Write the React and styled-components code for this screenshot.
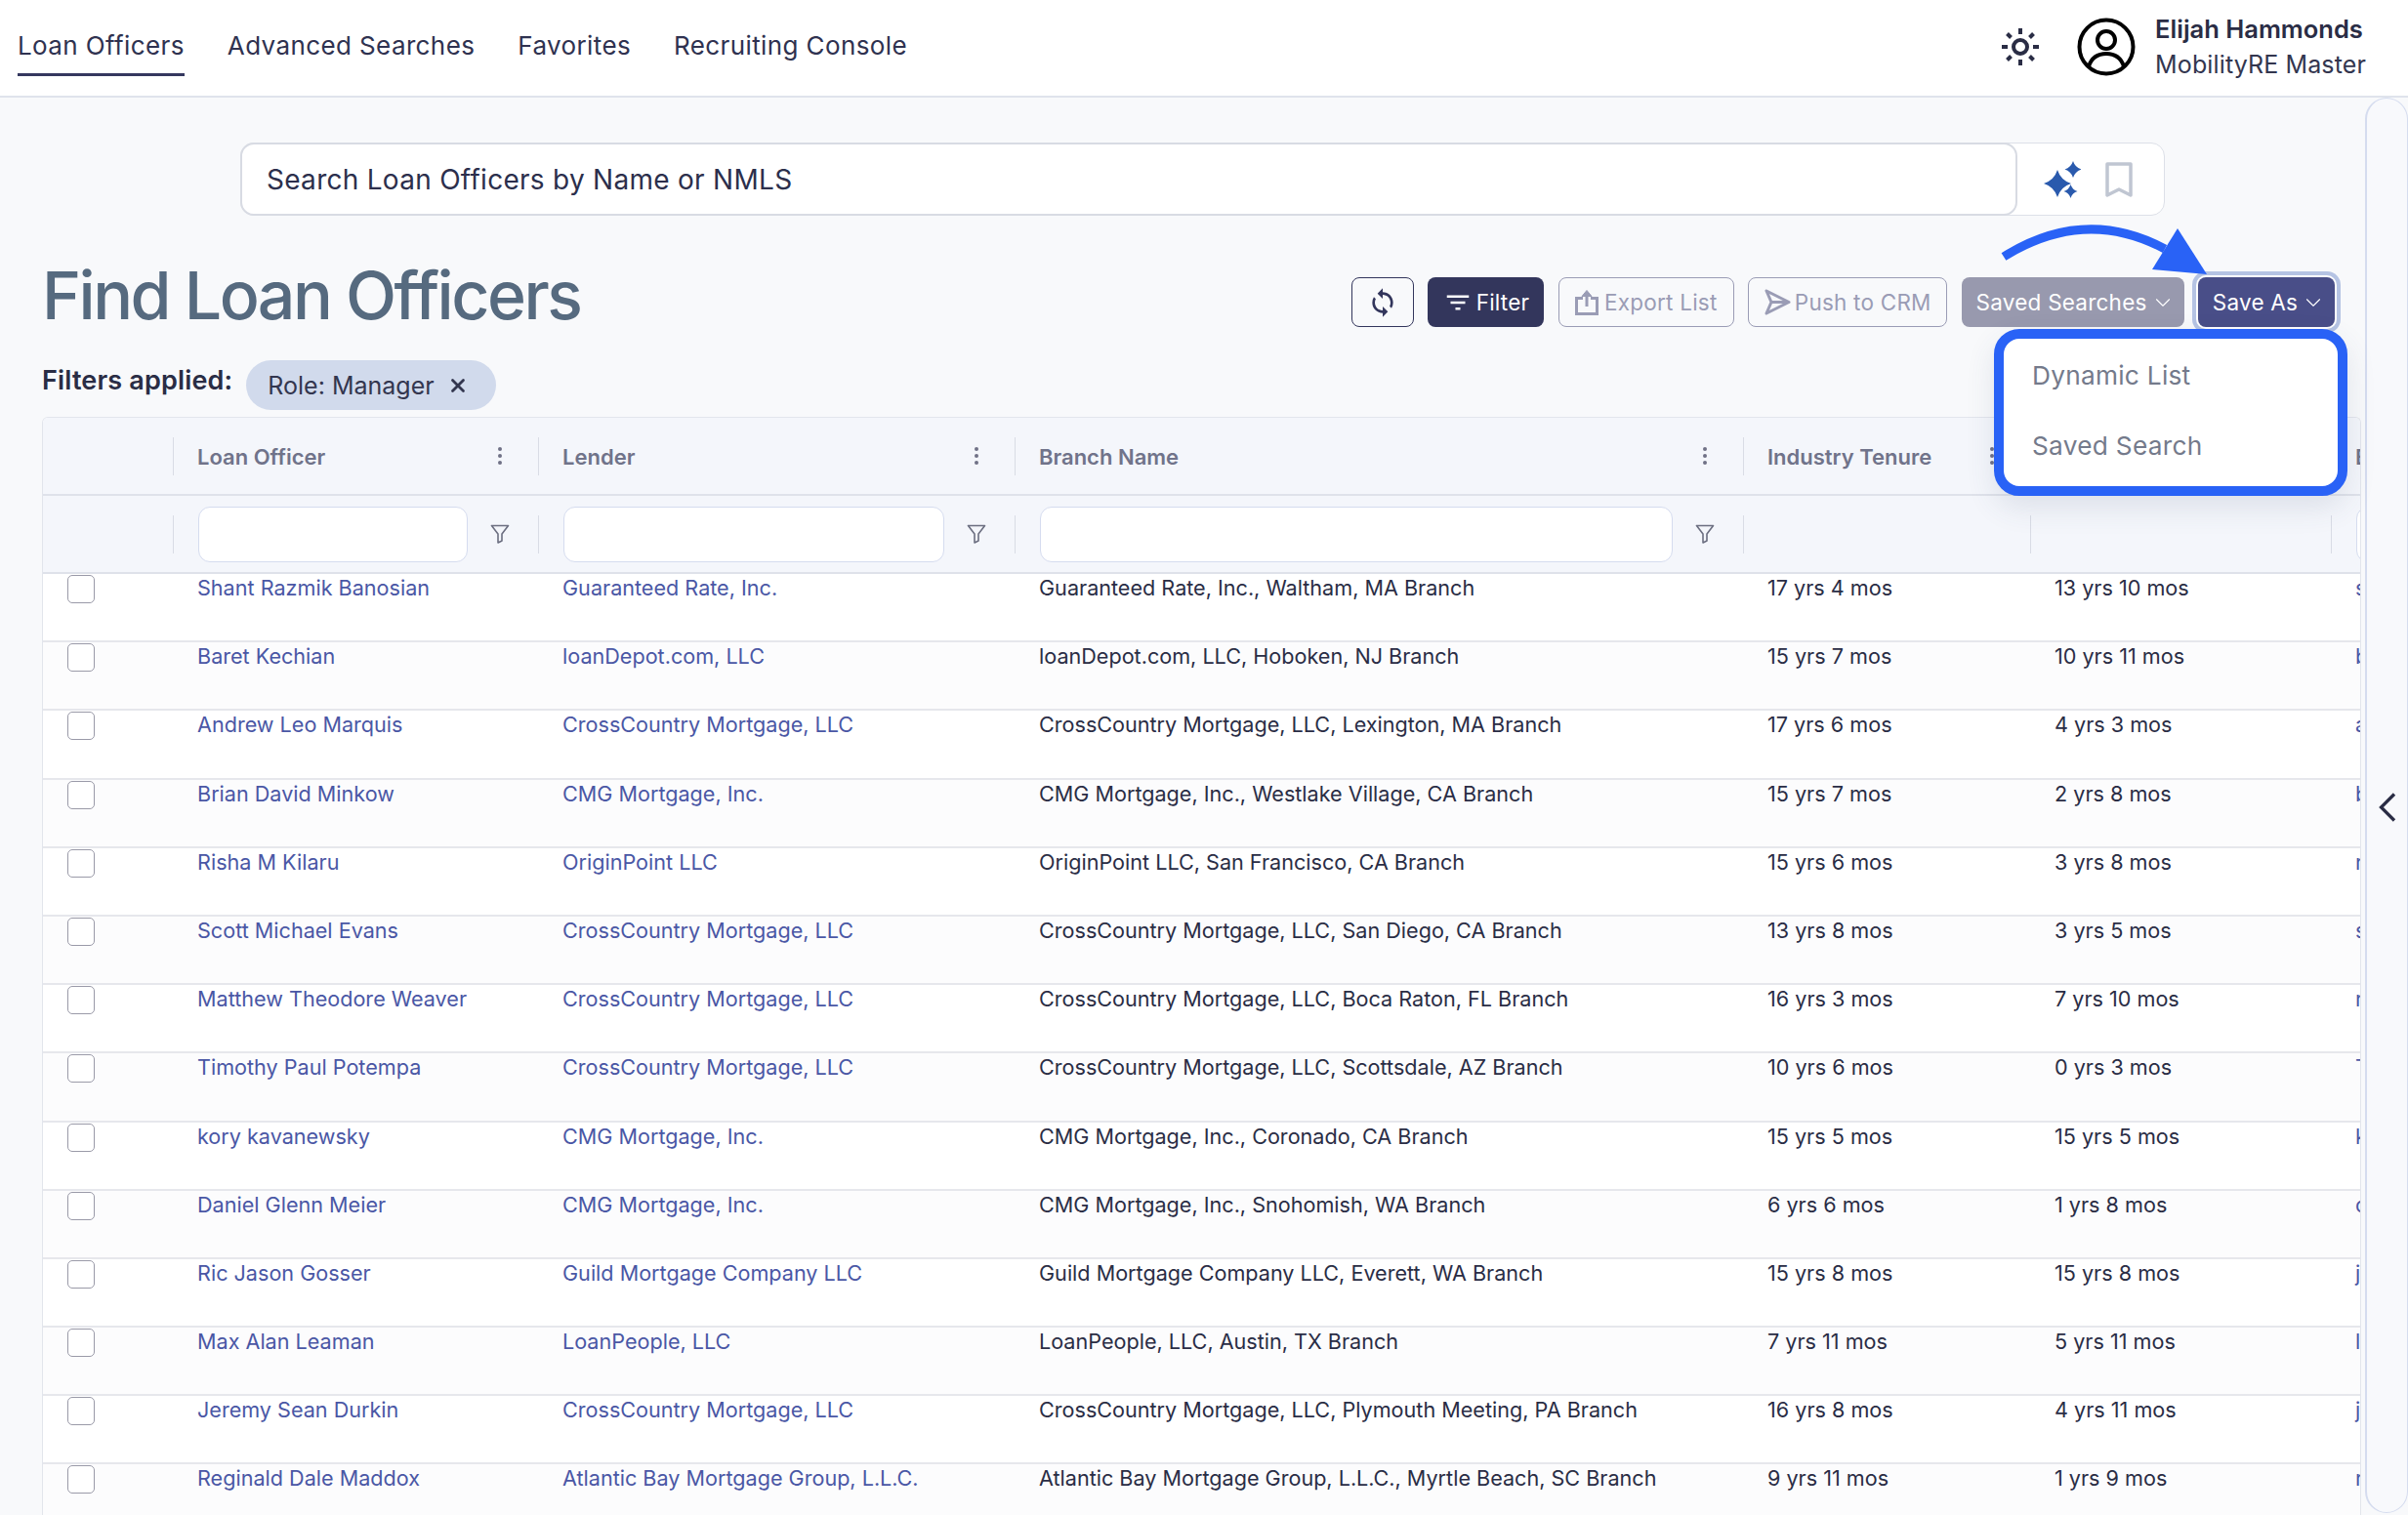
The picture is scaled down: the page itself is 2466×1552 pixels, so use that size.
import React from "react";
import styled, { createGlobalStyle } from "styled-components";
import { ChevronDown, X } from "lucide-react";
import { MdSync, MdFilterList } from "react-icons/md";

const GlobalStyle = createGlobalStyle`
  html, body { margin: 0; padding: 0; height: 100%; overflow: hidden; }
  body { font-family: "Inter", "Liberation Sans", sans-serif; color: #2a2d45; background: #f8f9fb; }
  * { box-sizing: border-box; }
`;

const Page = styled.div`
  width: 2466px;
  height: 1552px;
  display: flex;
  flex-direction: column;
  overflow: hidden;
`;

const TopBar = styled.header`
  height: 100px;
  flex: none;
  background: #fff;
  border-bottom: 2px solid #dfe3ec;
  display: flex;
  align-items: stretch;
  padding: 0 43px 0 18px;
`;

const Nav = styled.nav`
  display: flex;
  gap: 44px;
`;

const NavItem = styled.a`
  font-size: 26px;
  letter-spacing: 0.015em;
  color: #2f3250;
  height: 78px;
  padding-top: 29px;
  line-height: 36px;
  border-bottom: 3px solid ${(p) => (p.$active ? "#35385f" : "transparent")};
`;

const UserBox = styled.div`
  margin-left: auto;
  display: flex;
  align-items: center;
  padding-bottom: 2px;
`;

const SunWrap = styled.div`
  display: flex;
  margin-right: 39px;
`;

const UserText = styled.div`
  margin-left: 20px;
  display: flex;
  flex-direction: column;
  gap: 6px;
`;

const UserName = styled.div`
  font-size: 25.5px;
  font-weight: 600;
  line-height: 30px;
  color: #2a2d45;
`;

const UserRole = styled.div`
  font-size: 25px;
  line-height: 30px;
  letter-spacing: 0.005em;
  color: #33364f;
`;

const Body = styled.div`
  flex: 1;
  display: flex;
  min-height: 0;
`;

const Content = styled.main`
  width: 2418px;
  flex: none;
  padding-left: 43px;
  display: flex;
  flex-direction: column;
  min-width: 0;
`;

const SearchRow = styled.div`
  margin: 46px 0 0 203px;
  width: 1971px;
  height: 75px;
  display: flex;
  border: 1px solid #dde0e8;
  border-radius: 14px;
  background: #fff;
  flex: none;
`;

const SearchBox = styled.div`
  width: 1820px;
  margin: -1px 0 -1px -1px;
  border: 2px solid #d8dbe3;
  border-radius: 14px;
  font-size: 28px;
  letter-spacing: 0.01em;
  color: #2c2f4c;
  display: flex;
  align-items: center;
  padding-left: 25px;
`;

const SearchTools = styled.div`
  flex: 1;
  display: flex;
  align-items: center;
  padding-left: 27px;
  gap: 25px;
`;

const TitleRow = styled.div`
  flex: none;
  height: 130px;
  display: flex;
  align-items: flex-start;
  padding-right: 27px;
`;

const Title = styled.h1`
  margin: 44px 0 0 0;
  font-size: 68px;
  font-weight: 500;
  line-height: 74px;
  letter-spacing: -0.037em;
  color: #566a7f;
`;

const Toolbar = styled.div`
  margin: 63px 0 0 auto;
  display: flex;
  gap: 14.4px;
  position: relative;
`;

const ToolButton = styled.button`
  font: inherit;
  height: 51px;
  width: ${(p) => p.$w}px;
  padding: 0;
  font-size: 22.5px;
  letter-spacing: 0.01em;
  border-radius: 8px;
  display: flex;
  align-items: center;
  justify-content: center;
  gap: ${(p) => p.$gap || 0}px;
  border: 1px solid ${(p) => p.$line || "transparent"};
  background: ${(p) => p.$bg || "transparent"};
  color: ${(p) => p.$fg || "#fff"};
`;

const SaveAs = styled(ToolButton)`
  box-shadow: 0 0 0 2px #fff, 0 0 0 6px #b5c3e3;
`;

const Caret = styled(ChevronDown)`
  margin: 0 -6px;
  flex: none;
`;

const Dropdown = styled.div`
  position: absolute;
  top: 53px;
  right: -13px;
  width: 362px;
  height: 171px;
  background: #fff;
  border: 10px solid #2962f6;
  border-radius: 26px;
  box-shadow: 0 12px 30px rgba(60, 70, 110, 0.12);
  padding: 2px 0 0 29px;
  z-index: 5;
`;

const DropItem = styled.div`
  font-size: 26.25px;
  letter-spacing: 0.01em;
  line-height: 72px;
  color: #747a8b;
`;

const ArrowOverlay = styled.svg`
  position: absolute;
  left: 656px;
  top: -60px;
  width: 230px;
  height: 64px;
  overflow: visible;
  z-index: 6;
`;

const FiltersRow = styled.div`
  flex: none;
  height: 76px;
  display: flex;
  align-items: flex-start;
  padding-top: 18px;
  gap: 14px;
`;

const FiltersLabel = styled.div`
  font-size: 27px;
  font-weight: 600;
  line-height: 42px;
  letter-spacing: 0.006em;
  color: #2a2d45;
`;

const Chip = styled.div`
  width: 256px;
  height: 51px;
  border-radius: 26px;
  background: #d1daec;
  font-size: 25px;
  color: #33364f;
  display: flex;
  align-items: center;
  padding-left: 22px;
  gap: 13px;
`;

const Table = styled.section`
  flex: 1;
  min-height: 0;
  overflow: hidden;
  border: 1px solid #e2e5ec;
  border-bottom: 0;
  border-radius: 6px 6px 0 0;
  background: #fff;
`;

const cols = "133px 374px 488px 746px 294px 308px 300px";

const HeadRow = styled.div`
  display: grid;
  grid-template-columns: ${cols};
  height: 80px;
  background: #f4f6fb;
  border-bottom: 2px solid #dfe2ea;
`;

const FilterRow = styled(HeadRow)``;

const HeadCell = styled.div`
  display: flex;
  align-items: center;
  min-width: 0;
`;

const Sep = styled.span`
  flex: none;
  width: 1px;
  height: 39px;
  background: #d9dce5;
`;

const HeadLabel = styled.span`
  margin-left: 24px;
  padding-top: 1px;
  font-size: 22px;
  font-weight: 600;
  color: #70738a;
  white-space: nowrap;
`;

const Kebab = styled.svg`
  flex: none;
  margin-left: auto;
  margin-right: 36px;
  color: #6f7186;
`;

const FilterInput = styled.div`
  flex: 1;
  height: 57px;
  margin-left: 25px;
  background: #fff;
  border: 1px solid #d5dcef;
  border-radius: 12px;
  min-width: ${(p) => p.$min || 0}px;
`;

const Funnel = styled.svg`
  flex: none;
  margin: 0 29px 0 23px;
`;

const Row = styled.div`
  display: grid;
  grid-template-columns: ${cols};
  height: 70.2px;
  background: ${(p) => (p.$odd ? "#fcfcfd" : "#fff")};
  border-bottom: 2px solid #e6e7ec;
`;

const Cell = styled.div`
  padding: 1px 0 0 25px;
  font-size: 21.6px;
  line-height: 26px;
  white-space: nowrap;
  overflow: hidden;
  color: ${(p) => (p.$link ? "#4a57a5" : "#2a2d45")};
`;

const CheckCell = styled.div`
  padding: 1px 0 0 25px;
`;

const CheckBox = styled.div`
  width: 28px;
  height: 29px;
  border: 1.5px solid #9a9aa8;
  border-radius: 5px;
  background: #fff;
`;

const Rail = styled.aside`
  margin-left: 4px;
  flex: 1;
  margin-bottom: 2px;
  border: 1px solid #d5dcef;
  border-left-width: 2px;
  border-radius: 30px;
  background: #f8f9fc;
  display: flex;
  align-items: flex-start;
  padding: 711px 0 0 12px;
`;

const rows = [
  ["Shant Razmik Banosian", "Guaranteed Rate, Inc.", "Guaranteed Rate, Inc., Waltham, MA Branch", "17 yrs 4 mos", "13 yrs 10 mos", "s"],
  ["Baret Kechian", "loanDepot.com, LLC", "loanDepot.com, LLC, Hoboken, NJ Branch", "15 yrs 7 mos", "10 yrs 11 mos", "b"],
  ["Andrew Leo Marquis", "CrossCountry Mortgage, LLC", "CrossCountry Mortgage, LLC, Lexington, MA Branch", "17 yrs 6 mos", "4 yrs 3 mos", "a"],
  ["Brian David Minkow", "CMG Mortgage, Inc.", "CMG Mortgage, Inc., Westlake Village, CA Branch", "15 yrs 7 mos", "2 yrs 8 mos", "b"],
  ["Risha M Kilaru", "OriginPoint LLC", "OriginPoint LLC, San Francisco, CA Branch", "15 yrs 6 mos", "3 yrs 8 mos", "r"],
  ["Scott Michael Evans", "CrossCountry Mortgage, LLC", "CrossCountry Mortgage, LLC, San Diego, CA Branch", "13 yrs 8 mos", "3 yrs 5 mos", "s"],
  ["Matthew Theodore Weaver", "CrossCountry Mortgage, LLC", "CrossCountry Mortgage, LLC, Boca Raton, FL Branch", "16 yrs 3 mos", "7 yrs 10 mos", "r"],
  ["Timothy Paul Potempa", "CrossCountry Mortgage, LLC", "CrossCountry Mortgage, LLC, Scottsdale, AZ Branch", "10 yrs 6 mos", "0 yrs 3 mos", "T"],
  ["kory kavanewsky", "CMG Mortgage, Inc.", "CMG Mortgage, Inc., Coronado, CA Branch", "15 yrs 5 mos", "15 yrs 5 mos", "k"],
  ["Daniel Glenn Meier", "CMG Mortgage, Inc.", "CMG Mortgage, Inc., Snohomish, WA Branch", "6 yrs 6 mos", "1 yrs 8 mos", "d"],
  ["Ric Jason Gosser", "Guild Mortgage Company LLC", "Guild Mortgage Company LLC, Everett, WA Branch", "15 yrs 8 mos", "15 yrs 8 mos", "j"],
  ["Max Alan Leaman", "LoanPeople, LLC", "LoanPeople, LLC, Austin, TX Branch", "7 yrs 11 mos", "5 yrs 11 mos", "l"],
  ["Jeremy Sean Durkin", "CrossCountry Mortgage, LLC", "CrossCountry Mortgage, LLC, Plymouth Meeting, PA Branch", "16 yrs 8 mos", "4 yrs 11 mos", "j"],
  ["Reginald Dale Maddox", "Atlantic Bay Mortgage Group, L.L.C.", "Atlantic Bay Mortgage Group, L.L.C., Myrtle Beach, SC Branch", "9 yrs 11 mos", "1 yrs 9 mos", "r"],
];

const SunIcon = () => (
  <svg width="38" height="38" viewBox="0 0 38 38" fill="none" stroke="#2a2d45" strokeWidth="4">
    <circle cx="19" cy="19" r="7" />
    <path d="M19 0v6M19 32v6M0 19h6M32 19h6M5.500 5.500l4 4M28.500 28.500l4 4M5.500 32.500l4-4M28.500 9.500l4-4" />
  </svg>
);

const AvatarIcon = () => (
  <svg width="60" height="60" viewBox="0 0 60 60" fill="none" stroke="#000" strokeWidth="4">
    <circle cx="30" cy="30" r="27.5" />
    <circle cx="30" cy="23" r="9" />
    <path d="M12 50c3-9 10-13 18-13s15 4 18 13" />
  </svg>
);

// four pointed star, centre and radius in the icon's own units
const star = (cx, cy, r) => {
  const k = r * 0.24;
  return `M${cx} ${cy - r}Q${cx + k} ${cy - k} ${cx + r} ${cy}Q${cx + k} ${cy + k} ${cx} ${cy + r}Q${cx - k} ${cy + k} ${cx - r} ${cy}Q${cx - k} ${cy - k} ${cx} ${cy - r}z`;
};

const SparkIcon = () => (
  <svg width="38" height="38" viewBox="0 0 38 38" fill="#2a5aad">
    <path d={star(14, 23, 14)} />
    <path d={star(30, 8.500, 8.500)} />
    <path d={star(27.500, 31, 7)} />
  </svg>
);

const BookmarkIcon = () => (
  <svg width="28" height="36" viewBox="0 0 28 36" fill="none" stroke="#c0c6d2" strokeWidth="3.500" strokeLinejoin="round">
    <path d="M2 2h24v32l-12-6-12 6z" />
  </svg>
);

const ExportIcon = () => (
  <svg width="24" height="27" viewBox="0 0 24 27" fill="none" stroke="#9a9cb5" strokeWidth="3">
    <path d="M8 9.500H1.500v16h21v-16H16" />
    <path d="M12 18V4" />
    <path d="M7 7.500l5-6 5 6z" fill="#9a9cb5" strokeWidth="1" />
  </svg>
);

const PlaneIcon = () => (
  <svg width="27" height="27" viewBox="0 0 27 27" fill="none" stroke="#9a9cb5" strokeWidth="3" strokeLinejoin="round">
    <path d="M2 2l23 11.500L2 25l5-11.500zM7 13.500h18" />
  </svg>
);

const KebabIcon = () => (
  <Kebab width="6" height="20" viewBox="0 0 6 20" fill="currentColor">
    <circle cx="3" cy="3" r="2" />
    <circle cx="3" cy="10" r="2" />
    <circle cx="3" cy="17" r="2" />
  </Kebab>
);

const FunnelIcon = () => (
  <Funnel width="20" height="20" viewBox="0 0 20 20" fill="none" stroke="#6b6e80" strokeWidth="1.600" strokeLinejoin="round">
    <path d="M1.500 1.500h17L12 10v7l-4 2v-9z" />
  </Funnel>
);

const heads = ["Loan Officer", "Lender", "Branch Name", "Industry Tenure"];

const App = () => {
  return (
    <Page>
      <GlobalStyle />
      <TopBar>
        <Nav>
          <NavItem $active>Loan Officers</NavItem>
          <NavItem>Advanced Searches</NavItem>
          <NavItem>Favorites</NavItem>
          <NavItem>Recruiting Console</NavItem>
        </Nav>
        <UserBox>
          <SunWrap><SunIcon /></SunWrap>
          <AvatarIcon />
          <UserText>
            <UserName>Elijah Hammonds</UserName>
            <UserRole>MobilityRE Master</UserRole>
          </UserText>
        </UserBox>
      </TopBar>
      <Body>
        <Content>
          <SearchRow>
            <SearchBox>Search Loan Officers by Name or NMLS</SearchBox>
            <SearchTools>
              <SparkIcon />
              <BookmarkIcon />
            </SearchTools>
          </SearchRow>
          <TitleRow>
            <Title>Find Loan Officers</Title>
            <Toolbar>
              <ToolButton $w={64} $line="#33365c" $fg="#33365c"><MdSync size={32} /></ToolButton>
              <ToolButton $w={119} $bg="#33365c" $gap={4}><MdFilterList size={30} />Filter</ToolButton>
              <ToolButton $w={180} $line="#9a9cb5" $fg="#9a9cb5" $gap={6}><ExportIcon />Export List</ToolButton>
              <ToolButton $w={204} $line="#9a9cb5" $fg="#9a9cb5" $gap={4}><PlaneIcon />Push to CRM</ToolButton>
              <ToolButton $w={228} $bg="#9899ae" $gap={9}>Saved Searches<Caret size={26} strokeWidth={1} /></ToolButton>
              <SaveAs $w={140} $bg="#494e88" $gap={9}>Save As<Caret size={26} strokeWidth={1} /></SaveAs>
              <ArrowOverlay viewBox="0 0 230 64">
                <path d="M12 39Q95 -13 177 31" fill="none" stroke="#2962f6" strokeWidth="9" />
                <path d="M220 57L190 10L164 52z" fill="#2962f6" />
              </ArrowOverlay>
              <Dropdown>
                <DropItem>Dynamic List</DropItem>
                <DropItem>Saved Search</DropItem>
              </Dropdown>
            </Toolbar>
          </TitleRow>
          <FiltersRow>
            <FiltersLabel>Filters applied:</FiltersLabel>
            <Chip>Role: Manager<X size={22} strokeWidth={3} /></Chip>
          </FiltersRow>
          <Table>
            <HeadRow>
              <HeadCell />
              {heads.map((h) => (
                <HeadCell key={h}><Sep /><HeadLabel>{h}</HeadLabel><KebabIcon /></HeadCell>
              ))}
              <HeadCell><Sep /></HeadCell>
              <HeadCell><Sep /><HeadLabel>Email</HeadLabel></HeadCell>
            </HeadRow>
            <FilterRow>
              <HeadCell />
              <HeadCell><Sep /><FilterInput /><FunnelIcon /></HeadCell>
              <HeadCell><Sep /><FilterInput /><FunnelIcon /></HeadCell>
              <HeadCell><Sep /><FilterInput /><FunnelIcon /></HeadCell>
              <HeadCell><Sep /></HeadCell>
              <HeadCell><Sep /></HeadCell>
              <HeadCell><Sep /><FilterInput $min={200} /></HeadCell>
            </FilterRow>
            {rows.map((r, i) => (
              <Row key={r[0]} $odd={i % 2 === 1}>
                <CheckCell><CheckBox /></CheckCell>
                <Cell $link>{r[0]}</Cell>
                <Cell $link>{r[1]}</Cell>
                <Cell>{r[2]}</Cell>
                <Cell>{r[3]}</Cell>
                <Cell>{r[4]}</Cell>
                <Cell $link>{r[5]}</Cell>
              </Row>
            ))}
          </Table>
        </Content>
        <Rail>
          <svg width="18" height="30" viewBox="0 0 18 30" fill="none" stroke="#2a2d45" strokeWidth="3.300">
            <path d="M16 1.500L2.500 15L16 28.500" />
          </svg>
        </Rail>
      </Body>
    </Page>
  );
};

export default App;
